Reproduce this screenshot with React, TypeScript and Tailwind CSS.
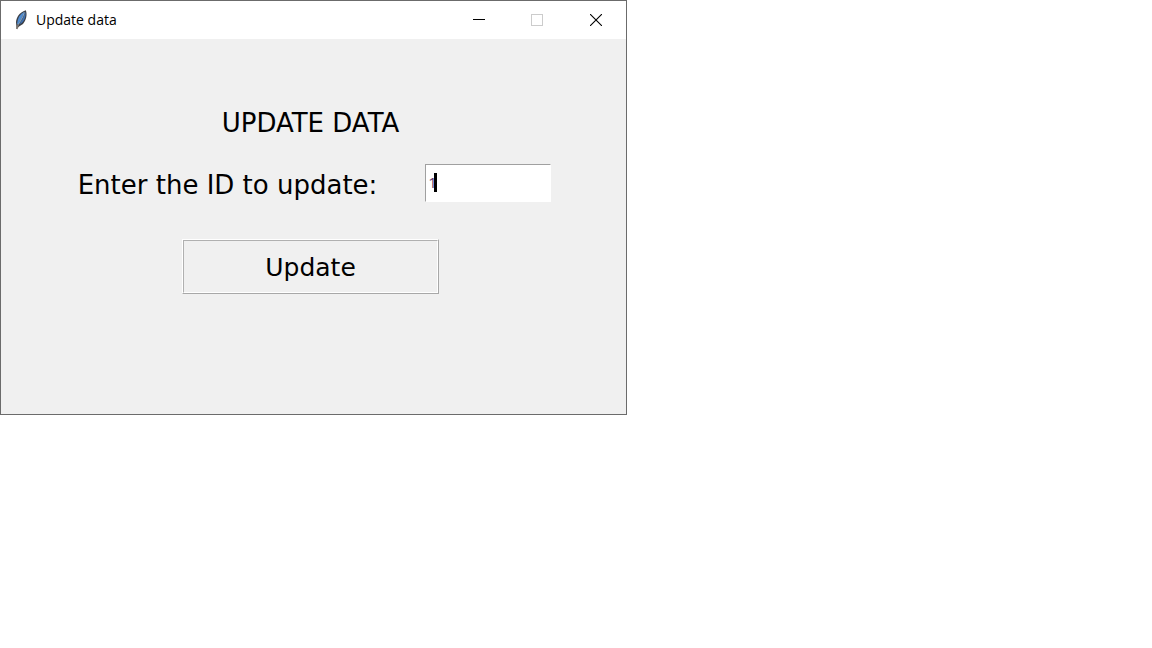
import { useState } from "react";

function Feather() {
  return (
    <svg width="16" height="22" viewBox="0 0 16 22" aria-hidden="true">
      <path d="M3.6 20 3 13.2C3.4 8.4 6 3.4 12.8 1.2 14.6 5.6 13 11.4 10 15L6 17.6Z" fill="#3b3e44" />
      <path d="M4.2 14.2C4.8 9 7 5 11.4 2.8L8.4 9.6 5 15.6Z" fill="#4f8bd0" />
      <path d="M12.4 2.8C13.2 7 11.8 11 9 13.8L6.2 15.6 9.8 9.4Z" fill="#3d6fb0" />
      <path d="M11.4 3.4C9.8 8.6 7 13 4.6 16.4" fill="none" stroke="#9cc6ee" strokeWidth="0.8" />
      <path d="M5.2 15.6 3.8 20" fill="none" stroke="#77716c" strokeWidth="1.6" />
    </svg>
  );
}

function TitleBar() {
  return (
    <header className="flex h-[38px] items-center bg-white pr-px pl-3">
      <Feather />
      <h1 className="ml-[7px] flex-1 font-['Open_Sans','Noto_Sans',sans-serif] text-[14px] leading-5 text-black">
        Update data
      </h1>
      <button type="button" aria-label="Minimize" className="flex h-full w-[58px] items-center justify-center">
        <svg width="12" height="12" shapeRendering="crispEdges">
          <rect y="5" width="12" height="1" fill="#000" />
        </svg>
      </button>
      <button type="button" aria-label="Maximize" disabled className="flex h-full w-[58px] items-center justify-center">
        <svg width="12" height="12" shapeRendering="crispEdges">
          <rect x="0.5" y="0.5" width="11" height="11" fill="none" stroke="#ccc" />
        </svg>
      </button>
      <button type="button" aria-label="Close" className="flex h-full w-[59px] items-center justify-center">
        <svg width="12" height="12">
          <path d="M0 0 12 12M12 0 0 12" stroke="#000" strokeWidth="1.1" />
        </svg>
      </button>
    </header>
  );
}

export default function App() {
  const [id, setId] = useState("1");

  return (
    <div className="min-h-screen bg-white">
      <div className="w-full max-w-[627px] border border-[#6b6b6b] bg-[#f0f0f0]">
        <TitleBar />
        <form
          onSubmit={(e) => e.preventDefault()}
          className="flex flex-col items-center px-4 pt-[68px] pb-[120px] font-['DejaVu_Sans',sans-serif] text-[26px] leading-8 text-black"
        >
          <h2 className="pr-1.5">UPDATE DATA</h2>
          <div className="mt-[25px] flex items-center gap-12 pl-0.5">
            <label htmlFor="record-id" className="pt-1">Enter the ID to update:</label>
            <div className="relative">
              <input
                id="record-id"
                type="text"
                value={id}
                onChange={(e) => setId(e.target.value)}
                className="block h-[38px] w-[126px] border border-t-[#a0a0a0] border-r-white border-b-white border-l-[#a0a0a0] bg-white px-0.5 pb-0.5 font-['Open_Sans','Noto_Sans',sans-serif] text-[15px] text-[#5b3568] caret-transparent outline-none"
              />
              <span className="absolute top-[9px] left-[9px] h-[19px] w-[3px] bg-black" />
            </div>
          </div>
          <div className="mt-[37px] pr-1.5">
            <button
              type="submit"
              className="block h-[55px] w-[257px] border border-t-white border-r-[#a8a8a8] border-b-[#a8a8a8] border-l-white text-[25px]"
            >
              <span className="flex h-full items-center justify-center border border-t-[#b0b0b0] border-r-white border-b-white border-l-[#b0b0b0] pt-0.5">
                Update
              </span>
            </button>
          </div>
        </form>
      </div>
    </div>
  );
}
